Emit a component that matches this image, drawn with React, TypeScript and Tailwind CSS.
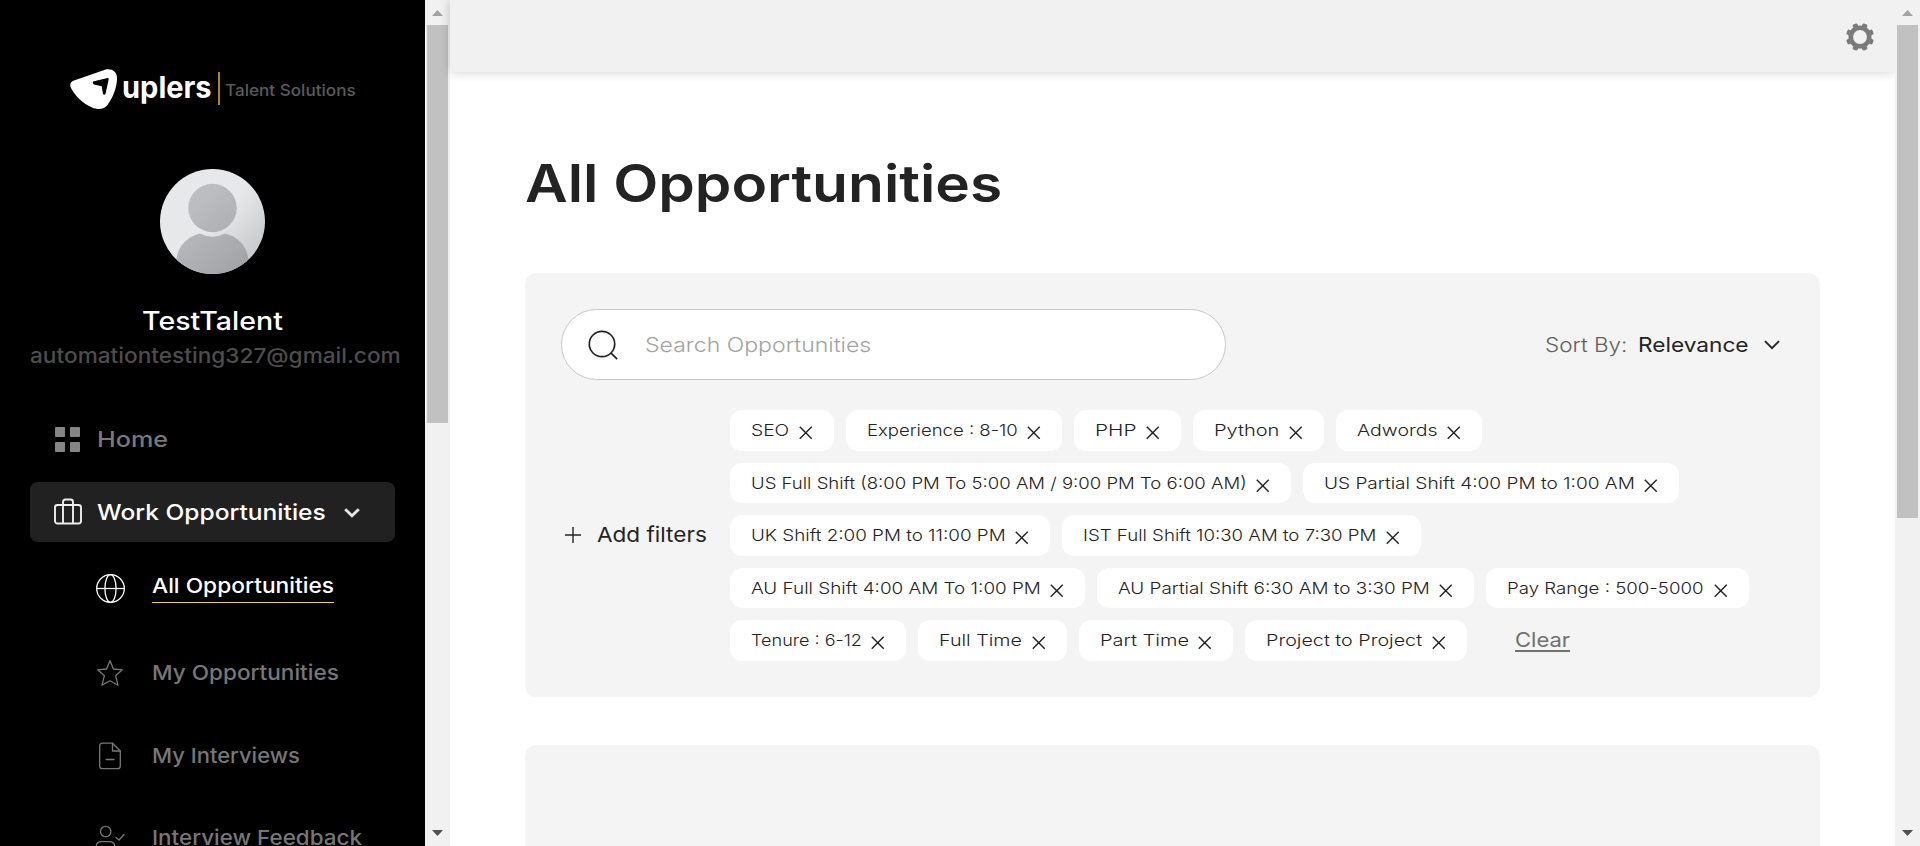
import { useLayoutEffect, useRef, useState } from "react";
import type { ReactNode } from "react";
import clsx from "clsx";

/** A single line of text stretched horizontally to the given width. */
function Wide({ w, className, children }: { w: number; className?: string; children: ReactNode }) {
  const ref = useRef<HTMLSpanElement>(null);
  const [scale, setScale] = useState(1);
  useLayoutEffect(() => {
    if (ref.current) setScale(w / ref.current.offsetWidth);
  }, [w]);
  return (
    <span className={clsx("block shrink-0", className)} style={{ width: w }}>
      <span
        ref={ref}
        className="inline-block origin-left align-top whitespace-nowrap"
        style={{ transform: `scaleX(${scale})` }}
      >
        {children}
      </span>
    </span>
  );
}

function Scrollbar({ thumb, className }: { thumb: string; className?: string }) {
  return (
    <div className={clsx("flex h-full w-[25px] shrink-0 flex-col items-center bg-[#f1f1f1]", className)}>
      <svg className="h-[25px] w-[25px] shrink-0" viewBox="0 0 25 25">
        <path d="M7 16L12.5 10L18 16Z" fill="#a3a3a3" />
      </svg>
      <div className={clsx("w-[21px] bg-[#c1c1c1]", thumb)} />
      <svg className="mt-auto h-[25px] w-[25px] shrink-0" viewBox="0 0 25 25">
        <path d="M7 9L18 9L12.5 15Z" fill="#505050" />
      </svg>
    </div>
  );
}

function Logo() {
  return (
    <div className="flex h-10 items-start pl-[70px]">
      <svg className="h-10 w-[47px] shrink-0" viewBox="0 0 47 40">
        <path
          d="M4 11.5L35 .8C42-1 47.5 3 47 10C46.500 20 43 28 37.500 36C34 40.500 28 41 22 38.500C13 34.500 5 27 1 19C-.7 15.500 .5 12.700 4 11.500Z"
          fill="#fff"
        />
        <path d="M23 12.500L37.500 9Q38.900 8.900 38.700 10.300L35.500 25Q34.300 26.500 33 25L31.700 17.300L24 15.500Q22 14 23 12.500Z" fill="#000" />
      </svg>
      <Wide w={90} className="ml-[5px] mt-[5px] text-[30px] font-bold leading-[27px] text-white">uplers</Wide>
      <div className="ml-[6px] mt-[3px] h-[33px] w-[1.500px] bg-[#ad871c]" />
      <Wide w={130.5} className="ml-[5px] mt-[11px] text-[16px] font-medium leading-5 text-[#5a5a5a]">Talent Solutions</Wide>
    </div>
  );
}

function Avatar() {
  return (
    <svg className="mx-auto mt-[60px] block h-[105px] w-[105px]" viewBox="0 0 105 105">
      <defs>
        <linearGradient id="avatar-bg" x1="0" y1="0" x2="1" y2="1">
          <stop offset="0.5" stopColor="#e7e8ea" />
          <stop offset="1" stopColor="#bcbdbf" />
        </linearGradient>
        <linearGradient id="avatar-fg" gradientUnits="userSpaceOnUse" x1="20" y1="20" x2="95" y2="105">
          <stop offset="0.2" stopColor="#bcbdc0" />
          <stop offset="1" stopColor="#9d9fa2" />
        </linearGradient>
        <clipPath id="avatar-clip">
          <circle cx="52.5" cy="52.5" r="52.5" />
        </clipPath>
      </defs>
      <g clipPath="url(#avatar-clip)">
        <rect width="105" height="105" fill="url(#avatar-bg)" />
        <circle cx="52.5" cy="39" r="24.200" fill="url(#avatar-fg)" />
        <path d="M40 64.500Q52.500 71 65 64.500C79 68 87 78 88.500 90V105H16.500V90C18 78 26 68 40 64.500Z" fill="url(#avatar-fg)" />
      </g>
    </svg>
  );
}

function SubItem({ icon, label, w, className }: { icon: ReactNode; label: string; w: number; className: string }) {
  return (
    <div className={clsx("flex h-10 items-center pl-[95px]", className)}>
      <svg className="mr-[27px] h-[30px] w-[30px] shrink-0" viewBox="0 0 30 30" fill="none" stroke="#777" strokeWidth="1.3" strokeLinejoin="round" strokeLinecap="round">
        {icon}
      </svg>
      <Wide w={w} className="text-[20.500px] font-medium leading-10 text-[#777]">{label}</Wide>
    </div>
  );
}

function Sidebar() {
  return (
    <aside className="h-full w-[425px] shrink-0 overflow-hidden bg-black pt-[69px]">
      <Logo />
      <Avatar />
      <Wide w={141} className="ml-[141.500px] mt-[29px] text-[25.500px] font-[450] leading-9 text-white">TestTalent</Wide>
      <Wide w={371} className="ml-[30px] text-[20.500px] font-medium leading-[33px] text-[#4d4d4d]">automationtesting327@gmail.com</Wide>

      <div className="mt-[37px] flex h-[60px] items-center pl-[55px]">
        <svg className="h-[25px] w-[25px] shrink-0" viewBox="0 0 25 25" fill="#858585">
          <rect width="10" height="10" rx="1" />
          <rect x="15" width="10" height="10" rx="1" />
          <rect y="15" width="10" height="10" rx="1" />
          <rect x="15" y="15" width="10" height="10" rx="1" />
        </svg>
        <Wide w={71} className="ml-[17px] text-[22px] font-medium leading-[60px] text-[#787878]">Home</Wide>
      </div>

      <div className="mx-[30px] mt-[13px] flex h-[60px] items-center rounded-lg bg-[#212121] pl-6">
        <svg className="h-[28px] w-[28px] shrink-0" viewBox="0 0 28 28" fill="none" stroke="#eee" strokeWidth="1.9">
          <rect x="1" y="7" width="26" height="18.500" rx="2.500" />
          <path d="M9 25.500V4Q9 1.500 11.500 1.500H16.500Q19 1.500 19 4V25.500" />
        </svg>
        <Wide w={229} className="ml-[15px] text-[22px] font-[450] leading-[60px] text-white">Work Opportunities</Wide>
        <svg className="ml-[18px] mt-px h-[10px] w-4" viewBox="0 0 16 10" fill="none" stroke="#e6e6e6" strokeWidth="2.800">
          <path d="M1.200 1.200L8 7.800L14.800 1.200" />
        </svg>
      </div>

      <div className="mt-[29px] flex h-[34px] items-start pl-[96px]">
        <svg className="mt-[3px] h-[29px] w-[29px] shrink-0" viewBox="0 0 29 29" fill="none" stroke="#fff" strokeWidth="1.300">
          <circle cx="14.500" cy="14.500" r="13.800" />
          <ellipse cx="14.500" cy="14.500" rx="5.600" ry="13.800" />
          <path d="M.7 14.500H28.300" />
        </svg>
        <Wide w={182} className="ml-[27px] h-8 border-b border-[#ffd02f] text-[20.500px] font-[450] leading-[30px] text-white">All Opportunities</Wide>
      </div>

      <SubItem
        className="mt-[48px]"
        label="My Opportunities"
        w={187}
        icon={<path d="M15 2.600L18.400 11L27.300 11.800L20.600 17.700L23 27.200L15 22.800L7 27.200L9.400 17.700L2.700 11.800L11.600 11Z" />}
      />
      <SubItem
        className="mt-[43px]"
        label="My Interviews"
        w={148}
        icon={
          <>
            <path d="M7.500 2.200H17.500L25.300 10V25Q25.300 27.700 22.500 27.700H7.500Q4.700 27.700 4.700 25V5Q4.700 2.200 7.500 2.200" />
            <path d="M17.500 2.200V10H25.300M11.200 18.500H19" />
          </>
        }
      />
      <SubItem
        className="mt-[42px]"
        label="Interview Feedback"
        w={210}
        icon={
          <>
            <circle cx="10.700" cy="8.500" r="5.200" />
            <path d="M1.200 27V24Q1.200 18.700 6.500 18.700H14.500Q19.800 18.700 19.800 24V27M21 14.500L24 17L29 11.500" />
          </>
        }
      />
    </aside>
  );
}

const GEAR_TEETH = [22.5, 67.5, 112.5, 157.5, 202.5, 247.5, 292.5, 337.5];

function Gear() {
  return (
    <svg className="mt-px h-7 w-7" viewBox="-14 -14 28 28" fill="#7b7b7b">
      {GEAR_TEETH.map((a) => (
        <rect key={a} x="-2.600" y="-14" width="5.200" height="6" rx="1.200" transform={`rotate(${a})`} />
      ))}
      <circle r="9.200" fill="none" stroke="#7b7b7b" strokeWidth="4.600" />
    </svg>
  );
}

const FILTERS: { label: string; w: number }[] = [
  { label: "SEO", w: 38.5 },
  { label: "Experience : 8-10", w: 150.5 },
  { label: "PHP", w: 41.5 },
  { label: "Python", w: 65.5 },
  { label: "Adwords", w: 80.5 },
  { label: "US Full Shift (8:00 PM To 5:00 AM / 9:00 PM To 6:00 AM)", w: 495.5 },
  { label: "US Partial Shift 4:00 PM to 1:00 AM", w: 310.5 },
  { label: "UK Shift 2:00 PM to 11:00 PM", w: 254.5 },
  { label: "IST Full Shift 10:30 AM to 7:30 PM", w: 293 },
  { label: "AU Full Shift 4:00 AM To 1:00 PM", w: 289.5 },
  { label: "AU Partial Shift 6:30 AM to 3:30 PM", w: 311.5 },
  { label: "Pay Range : 500-5000", w: 197 },
  { label: "Tenure : 6-12", w: 110.5 },
  { label: "Full Time", w: 83.5 },
  { label: "Part Time", w: 88.5 },
  { label: "Project to Project", w: 156.5 },
];

function Chip({ label, w }: { label: string; w: number }) {
  return (
    <div className="flex h-[40.500px] items-center rounded-xl bg-white pl-[21px] pr-[21.500px]">
      <Wide w={w} className="text-[16.500px] font-light leading-10 text-[#232323]">{label}</Wide>
      <svg className="ml-[9.500px] mt-[5px] h-[13.500px] w-[13.500px] shrink-0" viewBox="0 0 14 14" fill="none" stroke="#232323" strokeWidth="1.500">
        <path d="M.8 .8L13.200 13.200M13.200 .8L.8 13.200" />
      </svg>
    </div>
  );
}

export default function App() {
  return (
    <div className="flex h-[846px] w-[1920px] overflow-hidden bg-white font-['Inter',sans-serif]">
      <Sidebar />
      <Scrollbar thumb="h-[398px]" />
      <div className="flex h-full min-w-0 flex-1 flex-col">
        <header className="z-10 flex h-[72px] shrink-0 items-center justify-end bg-[#f1f1f1] pr-[21px] shadow-[0_0_10px_rgba(0,0,0,0.2)]">
          <Gear />
        </header>
        <main className="min-h-0 flex-1 overflow-hidden pl-[75px] pr-[75px]">
          <h1 className="mt-[76px] text-[52px] font-[560] leading-[72px] text-[#232323]">
            <Wide w={477}>All Opportunities</Wide>
          </h1>
          <section className="mt-[53px] h-[424px] rounded-xl bg-[#f4f4f4] px-9 pt-9">
            <div className="flex items-center">
              <div className="flex h-[71px] w-[665px] items-center rounded-full border border-[#c9c9c9] bg-white pl-[26px]">
                <svg className="h-[30px] w-[30px] shrink-0" viewBox="0 0 30 30" fill="none" stroke="#232323" strokeWidth="1.700">
                  <circle cx="14" cy="14" r="12.700" />
                  <path d="M22.800 22.800L29.200 29.200" />
                </svg>
                <Wide w={226} className="ml-[27px] pt-px text-[20px] font-light leading-[69px] text-[#a3a3a3]">Search Opportunities</Wide>
              </div>
              <Wide w={82} className="ml-auto pt-px text-[20px] font-light leading-[69px] text-[#606060]">Sort By:</Wide>
              <Wide w={111} className="ml-[11px] pt-px text-[20px] font-normal leading-[69px] text-[#232323]">Relevance</Wide>
              <svg className="ml-[15px] mr-[4px] h-[10px] w-4" viewBox="0 0 16 10" fill="none" stroke="#232323" strokeWidth="1.900">
                <path d="M1 1.200L8 8.200L15 1.200" />
              </svg>
            </div>
            <div className="mt-[30px] flex items-center">
              <svg className="ml-[3px] h-[18px] w-[18px] shrink-0" viewBox="0 0 18 18" stroke="#232323" strokeWidth="1.400">
                <path d="M9 1V17M1 9H17" />
              </svg>
              <Wide w={110} className="ml-[15px] text-[20.500px] font-normal leading-8 text-[#232323]">Add filters</Wide>
              <div className="ml-[23px] flex flex-1 flex-wrap gap-3">
                {FILTERS.map((f) => (
                  <Chip key={f.label} label={f.label} w={f.w} />
                ))}
                <Wide w={55} className="ml-9 mt-[10px] h-[22px] border-b-2 border-[#707070] text-[20px] font-normal leading-[21px] text-[#707070]">Clear</Wide>
              </div>
            </div>
          </section>
          <section className="mt-12 h-[300px] rounded-xl bg-[#f4f4f4]" />
        </main>
      </div>
      <Scrollbar thumb="h-[493px]" className="z-20" />
    </div>
  );
}
